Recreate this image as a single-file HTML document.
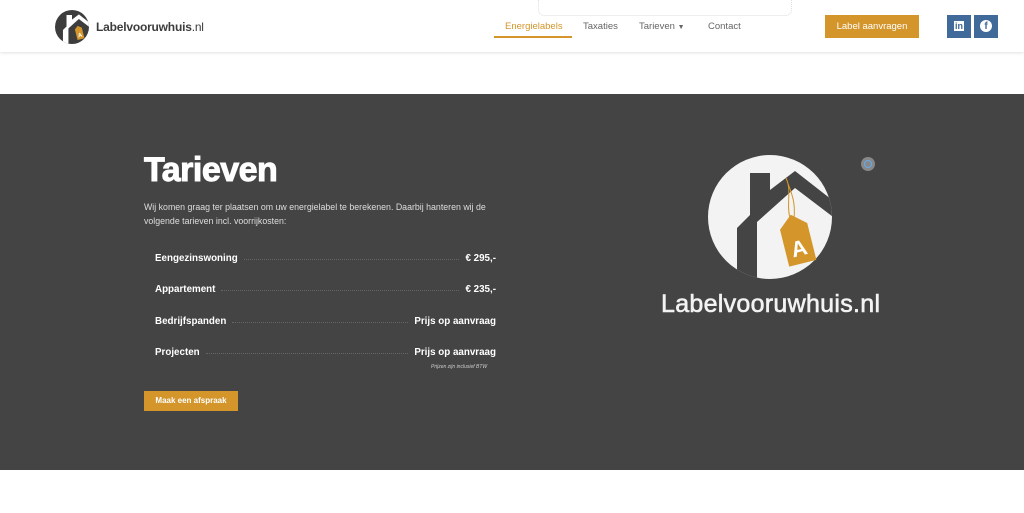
<!DOCTYPE html>
<html><head><meta charset="utf-8"><style>
*{margin:0;padding:0;box-sizing:border-box}
body{width:1024px;height:513px;background:#fff;font-family:"Liberation Sans",sans-serif;position:relative;overflow:hidden}
.hdr{position:absolute;left:0;top:0;width:1024px;height:52px;background:#fff;box-shadow:0 1px 3px rgba(0,0,0,.12)}
.a{position:absolute;white-space:nowrap}
.nav{font-size:9.5px;color:#666;top:21px}
.dark{position:absolute;left:0;top:94px;width:1024px;height:376px;background:#444}
.row{position:absolute;left:155px;width:341px;height:14px;font-size:9.8px;font-weight:bold;color:#fff;display:flex;align-items:center}
.row .d{flex:1;border-bottom:1px dotted #666;margin:0 6px;height:1px;margin-top:2px}
</style></head><body>
<div class="hdr">
<svg class="a" style="left:0;top:0" width="120" height="52" viewBox="0 0 120 52">
<defs><clipPath id="c1"><circle cx="770" cy="217" r="62"/></clipPath></defs>
<g transform="translate(72,27) scale(.274) translate(-770,-217)">
<circle cx="770" cy="217" r="62" fill="#3d3d3d"/>
<g clip-path="url(#c1)"><polygon fill="#fff" points="750,173 770,173 770,190 795,171 845,210 845,226 795,188 757,222 757,290 737,290 737,228 750,215"/></g>
<g transform="rotate(-14 797 238)"><path d="M784 222 L797 212 L810 222 L810 262 L784 262Z" fill="#d4952a"/><text x="797" y="254" font-size="22" font-weight="bold" fill="#fff" text-anchor="middle" font-family="Liberation Sans">A</text></g>
</g></svg>
<div class="a" style="left:96px;top:20px;font-size:12px;font-weight:bold;color:#3d3d3d;letter-spacing:-.2px">Labelvooruwhuis<span style="font-weight:normal">.nl</span></div>
<div class="a" style="left:538px;top:0;width:254px;height:16px;border:1px dotted #ddd;border-top:none;border-radius:0 0 6px 6px"></div>
<div class="a nav" style="left:505px;color:#d4952a">Energielabels</div>
<div class="a" style="left:494px;top:36px;width:78px;height:2px;background:#d4952a"></div>
<div class="a nav" style="left:583px">Taxaties</div>
<div class="a nav" style="left:639px">Tarieven <span style="font-size:7px">▼</span></div>
<div class="a nav" style="left:708px">Contact</div>
<div class="a" style="left:825px;top:15px;width:94px;height:23px;background:#d4952a;color:#fff;font-size:9.5px;text-align:center;line-height:23px">Label aanvragen</div>
<div class="a" style="left:947px;top:15px;width:24px;height:23px;background:#3f6a99;color:#fff;font-size:11px;font-weight:bold;text-align:center;line-height:23px"><span style="background:#fff;color:#3f6a99;padding:0 1px;font-size:9px">in</span></div>
<div class="a" style="left:974px;top:15px;width:24px;height:23px;background:#3f6a99"><div style="position:absolute;left:6px;top:5px;width:12px;height:12px;border-radius:50%;background:#fff;color:#3f6a99;font-size:10px;font-weight:bold;text-align:center;line-height:13px">f</div></div>
</div>
<div class="dark"></div>
<div class="a" style="left:144px;top:151px;font-size:34px;font-weight:bold;color:#fff;letter-spacing:-.5px;-webkit-text-stroke:1px #fff">Tarieven</div>
<div class="a" style="left:144px;top:200px;font-size:8.8px;color:#ddd;line-height:14px;white-space:normal;width:370px">Wij komen graag ter plaatsen om uw energielabel te berekenen. Daarbij hanteren wij de volgende tarieven incl. voorrijkosten:</div>
<div class="row" style="top:251px">Eengezinswoning<span class="d"></span>€ 295,-</div>
<div class="row" style="top:282px">Appartement<span class="d"></span>€ 235,-</div>
<div class="row" style="top:314px">Bedrijfspanden<span class="d"></span>Prijs op aanvraag</div>
<div class="row" style="top:345px">Projecten<span class="d"></span>Prijs op aanvraag</div>
<div class="a" style="left:431px;top:364px;font-size:5px;font-style:italic;color:#ccc">Prijzen zijn inclusief BTW</div>
<div class="a" style="left:144px;top:391px;width:94px;height:20px;background:#d4952a;color:#fff;font-size:8px;font-weight:bold;text-align:center;line-height:20px">Maak een afspraak</div>
<svg class="a" style="left:0;top:0" width="1024" height="513" viewBox="0 0 1024 513">
<defs><clipPath id="c2"><circle cx="770" cy="217" r="62"/></clipPath></defs>
<circle cx="770" cy="217" r="62" fill="#f3f3f3"/>
<g clip-path="url(#c2)"><polygon fill="#444" points="750,173 770,173 770,190 795,171 845,210 845,226 795,188 757,222 757,290 737,290 737,228 750,215"/></g>
<path d="M790 218 C786 205 792 190 786 178 C790 190 796 200 794 218" fill="none" stroke="#d4952a" stroke-width="1"/>
<g transform="rotate(-14 797 240)"><path d="M783 226 L797 214 L811 226 L811 264 L783 264Z" fill="#d4952a"/><text x="797" y="256" font-size="22" font-weight="bold" fill="#fff" text-anchor="middle" font-family="Liberation Sans">A</text></g>
<circle cx="868" cy="164" r="7" fill="#888"/><circle cx="868" cy="164" r="3.5" fill="none" stroke="#6aa6e0" stroke-width="1.2"/>
<text x="661" y="312" font-size="25" fill="#f3f3f3" stroke="#f3f3f3" stroke-width=".6" font-family="Liberation Sans" textLength="219">Labelvooruwhuis.nl</text>
</svg>
</body></html>
